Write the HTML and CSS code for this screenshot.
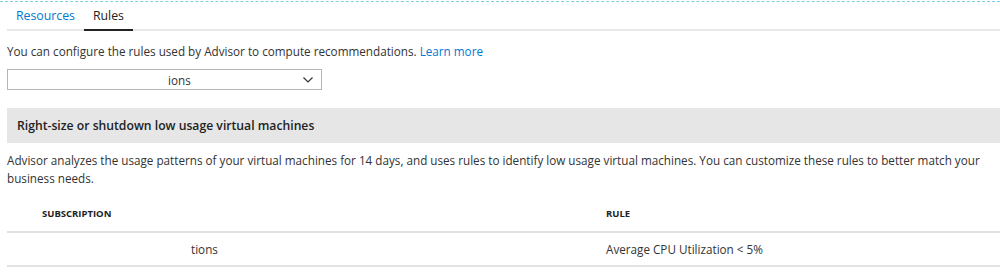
FILE: index.html
```html
<!DOCTYPE html>
<html lang="en">
<head>
    <meta charset="UTF-8">
    <title>Advisor rules</title>
    <link rel="stylesheet" href="styles.css">
</head>
<body>

<div class="frame">
    <div class="tabs">
        <a class="tab">Resources</a>
        <a class="tab active">Rules</a>
    </div>

    <p class="intro">You can configure the rules used by Advisor to compute recommendations. <a class="link">Learn more</a></p>

    <div class="select">
        <span class="select-text">ions</span>
        <svg class="chevron" width="10" height="6" viewBox="0 0 10 6">
            <path d="M0.5 0.5 L5 5 L9.5 0.5" fill="none" stroke="#333" stroke-width="1.2"/>
        </svg>
    </div>

    <div class="rule-head">Right-size or shutdown low usage virtual machines</div>
    <p class="rule-desc">Advisor analyzes the usage patterns of your virtual machines for 14 days, and uses rules to identify low usage virtual machines. You can customize these rules to better match your business needs.</p>

    <div class="grid">
        <div class="row head">
            <div class="cell sub">SUBSCRIPTION</div>
            <div class="cell">RULE</div>
        </div>
        <div class="row">
            <div class="cell sub"><span class="masked">tions</span></div>
            <div class="cell">Average CPU Utilization &lt; 5%</div>
        </div>
    </div>
</div>

</body>
</html>
```

FILE: styles.css
```css
body{
    margin:0;
    padding:0;
    background-color:white;
    font-family:"Open Sans", "Noto Sans", sans-serif;
    font-size:11.7px;
    color:#333;
}
.frame{
    border-top:1px dashed #7ccde6;
    margin-top:1px;
    padding-left:7px;
}
.tabs{
    display:flex;
    height:27px;
    border-bottom:2px solid #e8e8e8;
}
.tab{
    padding:0 9px;
    line-height:27px;
    font-size:12.3px;
    color:#0078d4;
}
.tab.active{
    color:#222;
    border-bottom:2px solid #222;
    margin-bottom:-2px;
}
.intro{
    margin:11px 0 0;
    line-height:18px;
}
.link{
    color:#0078d4;
}
.select{
    width:313px;
    height:19px;
    margin-top:9px;
    border:1px solid #b5b5b5;
    display:flex;
    align-items:center;
    justify-content:space-between;
}
.select-text{
    padding-left:160px;
}
.chevron{
    margin-right:8px;
}
.rule-head{
    margin-top:18px;
    height:35px;
    line-height:35px;
    padding-left:10px;
    background-color:#e6e6e6;
    font-size:12.2px;
    font-weight:600;
    color:#222;
}
.rule-desc{
    margin:8px 0 0;
    line-height:18px;
    padding-right:10px;
}
.row{
    display:grid;
    grid-template-columns:599px 1fr;
    height:32px;
    align-items:center;
    border-bottom:2px solid #e2e2e2;
}
.row.head{
    margin-top:9px;
    height:35px;
    font-size:9.5px;
    font-weight:700;
    color:#222;
}
.sub{
    padding-left:35px;
}
.masked{
    padding-left:149px;
}
```
